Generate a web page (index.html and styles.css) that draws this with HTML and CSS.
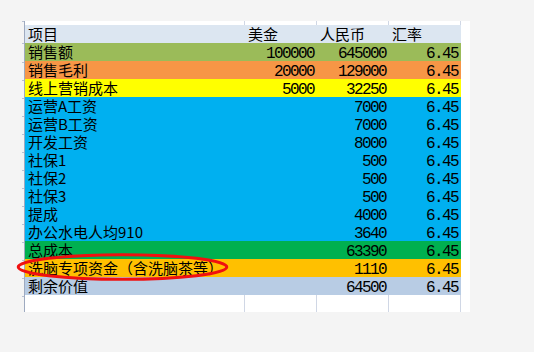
FILE: index.html
```html
<!DOCTYPE html>
<html lang="zh-CN">
<head>
<meta charset="utf-8">
<title>汇率表</title>
<link rel="stylesheet" href="styles.css">
</head>
<body>
<div class="sheet">
  <div class="row strip"><div class="tick top"></div><div class="c lab"></div><div class="c"></div><div class="c"></div><div class="c"></div><div class="pad"></div></div>
  <div class="row fill h"><div class="tick"></div><div class="c lab">项目</div><div class="c">美金</div><div class="c">人民币</div><div class="c">汇率</div><div class="pad"></div></div>
  <div class="row fill g"><div class="tick"></div><div class="c lab">销售额</div><div class="c num">100000</div><div class="c num">645000</div><div class="c num">6.45</div><div class="pad"></div></div>
  <div class="row fill o"><div class="tick"></div><div class="c lab">销售毛利</div><div class="c num">20000</div><div class="c num">129000</div><div class="c num">6.45</div><div class="pad"></div></div>
  <div class="row fill y"><div class="tick"></div><div class="c lab">线上营销成本</div><div class="c num">5000</div><div class="c num">32250</div><div class="c num">6.45</div><div class="pad"></div></div>
  <div class="row fill b"><div class="tick"></div><div class="c lab">运营A工资</div><div class="c num"></div><div class="c num">7000</div><div class="c num">6.45</div><div class="pad"></div></div>
  <div class="row fill b"><div class="tick"></div><div class="c lab">运营B工资</div><div class="c num"></div><div class="c num">7000</div><div class="c num">6.45</div><div class="pad"></div></div>
  <div class="row fill b"><div class="tick"></div><div class="c lab">开发工资</div><div class="c num"></div><div class="c num">8000</div><div class="c num">6.45</div><div class="pad"></div></div>
  <div class="row fill b"><div class="tick"></div><div class="c lab">社保1</div><div class="c num"></div><div class="c num">500</div><div class="c num">6.45</div><div class="pad"></div></div>
  <div class="row fill b"><div class="tick"></div><div class="c lab">社保2</div><div class="c num"></div><div class="c num">500</div><div class="c num">6.45</div><div class="pad"></div></div>
  <div class="row fill b"><div class="tick"></div><div class="c lab">社保3</div><div class="c num"></div><div class="c num">500</div><div class="c num">6.45</div><div class="pad"></div></div>
  <div class="row fill b"><div class="tick"></div><div class="c lab">提成</div><div class="c num"></div><div class="c num">4000</div><div class="c num">6.45</div><div class="pad"></div></div>
  <div class="row fill b"><div class="tick"></div><div class="c lab">办公水电人均910</div><div class="c num"></div><div class="c num">3640</div><div class="c num">6.45</div><div class="pad"></div></div>
  <div class="row fill dg"><div class="tick"></div><div class="c lab">总成本</div><div class="c num"></div><div class="c num">63390</div><div class="c num">6.45</div><div class="pad"></div></div>
  <div class="row fill gold"><div class="tick"></div><div class="c lab">洗脑专项资金（含洗脑茶等）</div><div class="c num"></div><div class="c num">1110</div><div class="c num">6.45</div><div class="pad"></div></div>
  <div class="row fill s"><div class="tick"></div><div class="c lab">剩余价值</div><div class="c num"></div><div class="c num">64500</div><div class="c num">6.45</div><div class="pad"></div></div>
  <div class="row blank"><div class="tick none"></div><div class="c lab"></div><div class="c"></div><div class="c"></div><div class="c"></div><div class="pad"></div></div>
  <svg class="mark" width="222" height="36" viewBox="0 0 222 36" aria-hidden="true">
    <ellipse cx="108.5" cy="17" rx="104.3" ry="12.3" fill="none" stroke="#f01010" stroke-width="3"/>
  </svg>
</div>
</body>
</html>
```

FILE: styles.css
```css
body {
  margin: 0;
  background: #f4f4f4;
  font-family: "Noto Sans CJK SC", sans-serif;
  font-size: 15px;
  color: #000;
}

.sheet {
  position: relative;
  margin: 21px 0 0 22px;
  width: 448px;
}

.row {
  display: grid;
  grid-template-columns: 2px 221px 72px 72px 72px 9px;
  height: 18px;
}

.row.strip { height: 4px; }
.row.blank { height: 17px; }

.tick {
  border-bottom: 1px solid #b9c1d2;
}
.tick.top {
  border-bottom: none;
  border-top: 1px solid #b9c1d2;
}
.tick.none { border: none; }

.c {
  box-sizing: border-box;
  border-right: 1px solid #d0d7e5;
  border-bottom: 1px solid #d0d7e5;
  background: var(--fill, #fff);
  padding: 0 3px;
  line-height: 18px;
  white-space: nowrap;
}

.c.lab {
  border-left: 1px solid #9eaac0;
}

.strip .c,
.blank .c {
  border-bottom: none;
}

.pad {
  background: #fff;
  border-bottom: 1px solid #d0d7e5;
}
.strip .pad,
.blank .pad {
  border-bottom: none;
}

.fill .c {
  border-right-color: transparent;
  border-bottom-color: transparent;
}

.num {
  text-align: right;
  font-family: "Liberation Mono", monospace;
  font-size: 16px;
  letter-spacing: -1.6px;
  line-height: 15px;
  padding-top: 4px;
  padding-right: 2px;
}

.h { --fill: #dce6f1; }
.g { --fill: #9bbb59; }
.o { --fill: #f79646; }
.y { --fill: #ffff00; }
.b { --fill: #00b0f0; }
.dg { --fill: #00b050; }
.gold { --fill: #ffc000; }
.s { --fill: #b8cce4; }

.mark {
  position: absolute;
  left: -8px;
  top: 229px;
}
```
